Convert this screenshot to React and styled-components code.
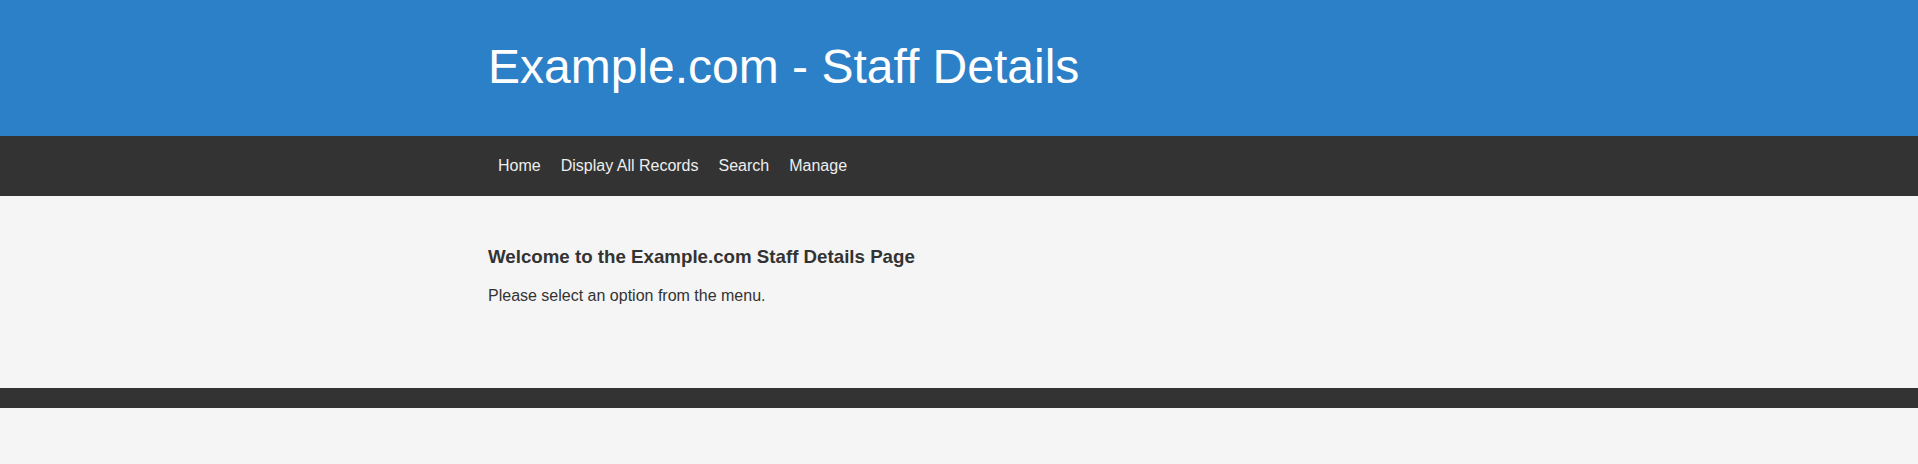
import React from "react";
import styled, { createGlobalStyle } from "styled-components";

const GlobalStyle = createGlobalStyle`
  html, body {
    margin: 0;
    padding: 0;
    background: #f5f5f5;
    font-family: "Liberation Sans", Arial, sans-serif;
    color: #333;
  }
`;

const Container = styled.div`
  width: 100%;
  max-width: 960px;
  margin: 0 auto;
  padding: 0 8px 0 9px;
  box-sizing: border-box;
`;

const Header = styled.header`
  background: #2c80c7;
  height: 136px;
  box-sizing: border-box;
  padding-top: 39px;
`;

const Title = styled.h1`
  margin: 0;
  font-size: 48px;
  font-weight: normal;
  color: #fff;
`;

const Nav = styled.nav`
  background: #333;
  height: 60px;
  display: flex;
  align-items: center;
`;

const Menu = styled.ul`
  list-style: none;
  margin: 0;
  padding: 0;
  display: flex;
`;

const MenuItem = styled.li`
  a {
    display: block;
    padding: 0 10px;
    color: #eee;
    font-size: 16px;
    text-decoration: none;
  }
`;

const Main = styled.main`
  height: 192px;
  box-sizing: border-box;
  padding-top: 31px;
`;

const Heading = styled.h3`
  font-size: 18.72px;
  margin: 18.72px 0 19.5px;
  color: #333;
`;

const Text = styled.p`
  font-size: 16px;
  margin: 16px 0;
  color: #333;
`;

const Footer = styled.footer`
  background: #333;
  height: 20px;
`;

const links = ["Home", "Display All Records", "Search", "Manage"];

export default function App() {
  return (
    <>
      <GlobalStyle />
      <Header>
        <Container>
          <Title>Example.com - Staff Details</Title>
        </Container>
      </Header>
      <Nav>
        <Container>
          <Menu>
            {links.map((l) => (
              <MenuItem key={l}>
                <a href="#">{l}</a>
              </MenuItem>
            ))}
          </Menu>
        </Container>
      </Nav>
      <Main>
        <Container>
          <Heading>Welcome to the Example.com Staff Details Page</Heading>
          <Text>Please select an option from the menu.</Text>
        </Container>
      </Main>
      <Footer />
    </>
  );
}
